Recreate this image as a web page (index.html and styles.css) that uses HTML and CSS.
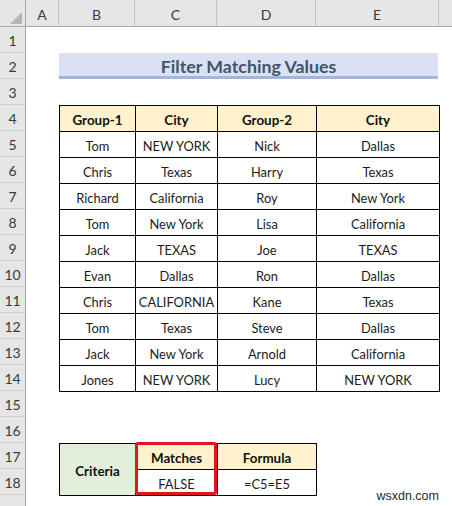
FILE: index.html
```html
<!DOCTYPE html>
<html>
<head>
<meta charset="utf-8">
<link rel="stylesheet" href="styles.css">
</head>
<body>
<div class="sheet">
  <div class="corner"><span class="tri"></span></div>
  <div class="ch">A</div>
  <div class="ch">B</div>
  <div class="ch">C</div>
  <div class="ch">D</div>
  <div class="ch">E</div>
  <div class="ch last"></div>

  <div class="rh">1</div>
  <div class="rh">2</div>
  <div class="rh">3</div>
  <div class="rh">4</div>
  <div class="rh">5</div>
  <div class="rh">6</div>
  <div class="rh">7</div>
  <div class="rh">8</div>
  <div class="rh">9</div>
  <div class="rh">10</div>
  <div class="rh">11</div>
  <div class="rh">12</div>
  <div class="rh">13</div>
  <div class="rh">14</div>
  <div class="rh">15</div>
  <div class="rh">16</div>
  <div class="rh">17</div>
  <div class="rh">18</div>
  <div class="rh tail"></div>

  <div class="title">Filter Matching Values</div>

  <table class="data">
    <colgroup><col class="cb"><col class="cc"><col class="cd"><col class="ce"></colgroup>
    <tr class="head"><th>Group-1</th><th>City</th><th>Group-2</th><th>City</th></tr>
    <tr><td>Tom</td><td>NEW YORK</td><td>Nick</td><td>Dallas</td></tr>
    <tr><td>Chris</td><td>Texas</td><td>Harry</td><td>Texas</td></tr>
    <tr><td>Richard</td><td>California</td><td>Roy</td><td>New York</td></tr>
    <tr><td>Tom</td><td>New York</td><td>Lisa</td><td>California</td></tr>
    <tr><td>Jack</td><td>TEXAS</td><td>Joe</td><td>TEXAS</td></tr>
    <tr><td>Evan</td><td>Dallas</td><td>Ron</td><td>Dallas</td></tr>
    <tr><td>Chris</td><td>CALIFORNIA</td><td>Kane</td><td>Texas</td></tr>
    <tr><td>Tom</td><td>Texas</td><td>Steve</td><td>Dallas</td></tr>
    <tr><td>Jack</td><td>New York</td><td>Arnold</td><td>California</td></tr>
    <tr><td>Jones</td><td>NEW YORK</td><td>Lucy</td><td>NEW YORK</td></tr>
  </table>

  <table class="crit">
    <colgroup><col class="cb"><col class="cc"><col class="cd"></colgroup>
    <tr><th rowspan="2" class="green">Criteria</th><th class="yellow">Matches</th><th class="yellow">Formula</th></tr>
    <tr><td>FALSE</td><td>=C5=E5</td></tr>
  </table>

  <div class="hl"></div>

  <div class="wm">wsxdn.com</div>
</div>
</body>
</html>
```

FILE: styles.css
```css
html, body {
  margin: 0;
  padding: 0;
  background: #ffffff;
}

.sheet {
  position: relative;
  width: 452px;
  height: 506px;
  overflow: hidden;
  display: grid;
  grid-template-columns: 26px 33px 76px 82px 99px 123px 1fr;
  grid-template-rows: 27px repeat(18, 26px) 1fr;
  font-family: Lato, "Open Sans", sans-serif;
  color: #1c1c1c;
}

.corner {
  grid-area: 1 / 1 / 2 / 2;
  background: #e6e6e6;
  border-right: 1px solid #a8a8a8;
  border-bottom: 1px solid #a8a8a8;
  box-sizing: border-box;
  position: relative;
}

.tri {
  position: absolute;
  left: 10px;
  top: 12px;
  width: 0;
  height: 0;
  border-left: 12px solid transparent;
  border-bottom: 12px solid #b5b5b5;
}

.ch {
  grid-row: 1;
  background: #e6e6e6;
  border-right: 1px solid #c4c4c4;
  border-bottom: 1px solid #a8a8a8;
  box-sizing: border-box;
  display: flex;
  align-items: center;
  justify-content: center;
  font-size: 14px;
  color: #3a3a3a;
  padding-top: 3px;
}

.ch.last {
  border-right: none;
}

.rh {
  grid-column: 1;
  background: #e6e6e6;
  border-right: 1px solid #a8a8a8;
  border-bottom: 1px solid #d0d0d0;
  box-sizing: border-box;
  display: flex;
  align-items: center;
  justify-content: center;
  font-size: 14px;
  color: #3a3a3a;
  padding-top: 2px;
}

.rh.tail {
  border-bottom: none;
}

.title {
  grid-area: 3 / 3 / 4 / 7;
  background: #d9e1f2;
  border-bottom: 3px solid #a5b4dc;
  box-sizing: border-box;
  display: flex;
  align-items: center;
  justify-content: center;
  font-weight: 700;
  font-size: 17.8px;
  color: #44546a;
  padding-top: 3px;
  margin-right: 1px;
}

table {
  border-collapse: collapse;
  table-layout: fixed;
  width: 100%;
  height: 100%;
}

.data {
  grid-area: 5 / 3 / 16 / 7;
}

.crit {
  grid-area: 18 / 3 / 20 / 6;
}

.cb { width: 76px; }
.cc { width: 82px; }
.cd { width: 99px; }
.ce { width: 123px; }

td, th {
  border: 1px solid #000000;
  height: 23px;
  padding: 2px 0 0 0;
  line-height: 16px;
  text-align: center;
  vertical-align: middle;
  font-size: 12.9px;
  white-space: nowrap;
  overflow: hidden;
}

th {
  font-weight: 700;
  font-size: 13.4px;
  color: #111111;
}

.head th, th.yellow {
  background: #fff2cc;
}

th.green {
  background: #e2efda;
}

.hl {
  grid-area: 18 / 4 / 20 / 5;
  border: 3px solid #e2141c;
  border-radius: 3px;
  margin: -1px 0 0 0;
  z-index: 2;
}

.wm {
  position: absolute;
  right: 13px;
  bottom: 3px;
  font-family: "Liberation Sans", Arial, sans-serif;
  font-size: 12.5px;
  color: #2a2a2a;
  z-index: 3;
}
```
